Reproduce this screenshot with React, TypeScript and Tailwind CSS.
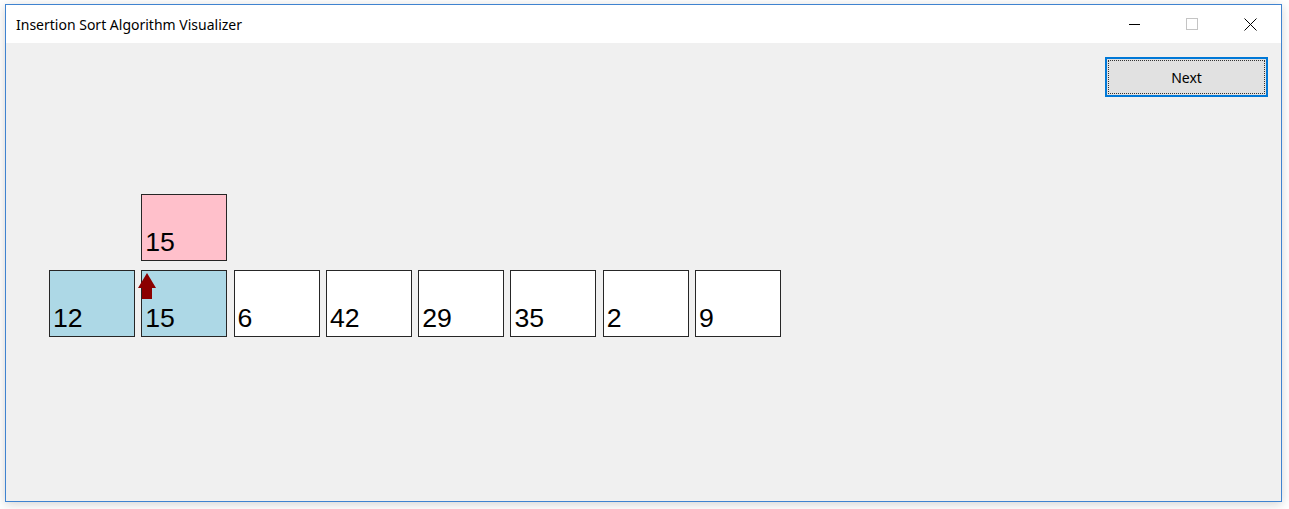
import React from "react";

type Cell = { v: number; bg: string };

const cells: Cell[] = [
  { v: 12, bg: "bg-[#add8e6]" },
  { v: 15, bg: "bg-[#add8e6]" },
  { v: 6, bg: "bg-white" },
  { v: 42, bg: "bg-white" },
  { v: 29, bg: "bg-white" },
  { v: 35, bg: "bg-white" },
  { v: 2, bg: "bg-white" },
  { v: 9, bg: "bg-white" },
];

function Box({ v, bg, children }: { v: number; bg: string; children?: React.ReactNode }) {
  return (
    <div
      className={`relative w-[86px] h-[67px] border border-[#262626] ${bg} flex items-end pl-[3px] pb-[4px] shrink-0`}
    >
      <span className="text-[26.67px] leading-none text-black [font-family:'Liberation_Sans',Arial,sans-serif]">
        {v}
      </span>
      {children}
    </div>
  );
}

export default function App() {
  return (
    <div className="w-[1289px] h-[509px] bg-white pt-[4px] pl-[5px] overflow-hidden">
      <div className="w-[1277px] h-[498px] border border-[#3f83d0] flex flex-col shadow-[0_2px_10px_rgba(0,0,0,0.18)]">
        {/* Title bar */}
        <div className="h-[38px] bg-white flex items-center shrink-0 [font-family:'Noto_Sans','Open_Sans',sans-serif]">
          <span className="pl-[10px] text-[14px] text-black">Insertion Sort Algorithm Visualizer</span>
          <div className="flex-1" />
          <div className="flex pr-[2px] h-full">
            <div className="w-[58px] h-full flex items-center justify-center">
              <svg width="11" height="1" viewBox="0 0 11 1">
                <rect x="0" y="0" width="11" height="1" fill="#000" />
              </svg>
            </div>
            <div className="w-[58px] h-full flex items-center justify-center">
              <svg width="12" height="12" viewBox="0 0 12 12">
                <rect x="0.5" y="0.5" width="11" height="11" fill="none" stroke="#c4c4c4" strokeWidth="1" />
              </svg>
            </div>
            <div className="w-[58px] h-full flex items-center justify-center">
              <svg width="13" height="13" viewBox="0 0 13 13">
                <path d="M0.5 0.5 L12.5 12.5 M12.5 0.5 L0.5 12.5" stroke="#000" strokeWidth="1" fill="none" />
              </svg>
            </div>
          </div>
        </div>

        {/* Client area */}
        <div className="flex-1 bg-[#f0f0f0] flex flex-col">
          <div className="flex justify-end pt-[14px] pr-[13px]">
            <button className="relative w-[163px] h-[40px] bg-[#e1e1e1] border-2 border-[#0078d7] text-[14px] text-black [font-family:'Noto_Sans','Open_Sans',sans-serif]">
              <span className="absolute inset-[1px] border border-dotted border-[#333]" />
              <span className="relative">Next</span>
            </button>
          </div>

          <div className="pl-[43px] mt-[97px]">
            <div className="flex gap-[6.3px]">
              <div className="w-[86px] shrink-0" />
              <Box v={15} bg="bg-[#ffc0cb]" />
            </div>
            <div className="flex gap-[6.3px] mt-[9px]">
              {cells.map((c, i) => (
                <Box key={i} v={c.v} bg={c.bg}>
                  {i === 1 && (
                    <svg
                      className="absolute left-[-4px] top-[2px]"
                      width="18"
                      height="26"
                      viewBox="0 0 18 26"
                    >
                      <polygon points="9,0 18,15 14,15 14,26 4,26 4,15 0,15" fill="#8b0000" />
                    </svg>
                  )}
                </Box>
              ))}
            </div>
          </div>
        </div>
      </div>
    </div>
  );
}
